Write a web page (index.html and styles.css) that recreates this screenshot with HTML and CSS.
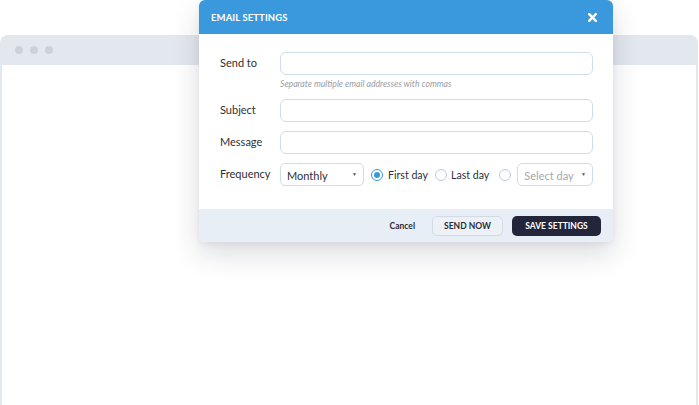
FILE: index.html
```html
<!DOCTYPE html>
<html>
<head>
<meta charset="utf-8">
<link rel="stylesheet" href="styles.css">
</head>
<body>
<div class="window">
  <div class="titlebar">
    <span class="dot"></span><span class="dot"></span><span class="dot"></span>
  </div>
  <div class="content"></div>
</div>

<div class="modal">
  <div class="modal-header">
    <span class="modal-title">EMAIL SETTINGS</span>
    <svg class="close" width="9" height="9" viewBox="0 0 9 9"><path d="M1.2 1.2L7.8 7.8M7.8 1.2L1.2 7.8" stroke="#fff" stroke-width="2.4" stroke-linecap="square"/></svg>
  </div>
  <div class="modal-body">
    <div class="row">
      <label class="label">Send to</label>
      <div class="field">
        <div class="input"></div>
        <div class="help">Separate multiple email addresses with commas</div>
      </div>
    </div>
    <div class="row">
      <label class="label">Subject</label>
      <div class="field"><div class="input"></div></div>
    </div>
    <div class="row">
      <label class="label">Message</label>
      <div class="field"><div class="input"></div></div>
    </div>
    <div class="row">
      <label class="label">Frequency</label>
      <div class="field freq">
        <div class="select monthly"><span>Monthly</span><span class="caret">▼</span></div>
        <span class="radio checked"></span><span class="rlabel">First day</span>
        <span class="radio"></span><span class="rlabel second">Last day</span>
        <span class="radio"></span>
        <div class="select day"><span class="ph">Select day</span><span class="caret">▼</span></div>
      </div>
    </div>
  </div>
  <div class="modal-footer">
    <span class="cancel">Cancel</span>
    <span class="btn secondary">SEND NOW</span>
    <span class="btn primary">SAVE SETTINGS</span>
  </div>
</div>
</body>
</html>
```

FILE: styles.css
```css
* { box-sizing: border-box; }
html, body { margin: 0; padding: 0; background: #fff; }
body {
  font-family: Lato, "Open Sans", sans-serif;
  width: 699px;
  height: 405px;
  overflow: hidden;
  position: relative;
}
.window {
  margin-top: 35px;
  margin-right: 1px;
  height: 380px;
  border: 2px solid #e3e7ee;
  border-bottom: none;
  border-radius: 8px 8px 0 0;
  display: flex;
  flex-direction: column;
}
.titlebar {
  height: 28px;
  background: #e3e7ee;
  display: flex;
  align-items: center;
  gap: 7px;
  padding-left: 13px;
  padding-bottom: 2px;
}
.dot {
  width: 8px;
  height: 8px;
  border-radius: 50%;
  background: #ccd2dc;
}
.content { flex: 1; background: #fff; }

.modal {
  position: absolute;
  left: 199px;
  top: 0;
  width: 414px;
  background: #fff;
  border-radius: 6px;
  box-shadow: 0 12px 28px rgba(30, 40, 60, 0.16), 0 2px 6px rgba(30,40,60,0.06);
  overflow: hidden;
}
.modal-header {
  height: 34px;
  background: #3a98dc;
  display: flex;
  align-items: center;
  justify-content: space-between;
  padding: 0 16px 0 12px;
}
.modal-title {
  color: #fff;
  font-weight: 700;
  font-size: 9.5px;
  letter-spacing: 0.1px;
}
.close { display: block; }

.modal-body {
  padding: 18px 20px 23px 21px;
  display: flex;
  flex-direction: column;
  gap: 9px;
}
.row {
  display: flex;
  align-items: flex-start;
}
.label {
  width: 60px;
  flex: none;
  font-size: 11px;
  color: #2d2f36;
  line-height: 21px;
}
.field { flex: 1; min-width: 0; }
.input {
  height: 23px;
  border: 1.5px solid #cfdcec;
  border-radius: 6px;
  background: #fff;
}
.help {
  font-size: 8.7px;
  font-style: italic;
  color: #9a9ea6;
  margin-top: 3px;
  line-height: 12px;
}
.freq {
  display: flex;
  align-items: center;
  height: 23px;
  white-space: nowrap;
}
.select {
  height: 23px;
  border: 1.5px solid #cfdcec;
  border-radius: 5px;
  display: flex;
  align-items: center;
  justify-content: space-between;
  padding: 0 6px 0 6px;
  font-size: 11px;
  color: #2d2f36;
  flex: none;
}
.select.monthly { width: 84px; margin-right: 7px; }
.select.monthly span:first-child { margin-top: 2px; }
.select.day { flex: 1; margin-left: 6px; }
.caret { font-size: 5px; color: #555; margin-bottom: 2px; }
.ph { color: #a3a7ae; margin-top: 2px; }
.radio {
  width: 12px;
  height: 12px;
  border-radius: 50%;
  border: 1px solid #bccbdc;
  flex: none;
  position: relative;
}
.radio.checked { border-color: #3a98dc; }
.radio.checked::after {
  content: "";
  position: absolute;
  left: 2px; top: 2px;
  width: 6px; height: 6px;
  border-radius: 50%;
  background: #3a98dc;
}
.rlabel {
  font-size: 10.6px;
  color: #2d2f36;
  margin-left: 5px;
  margin-right: 7px;
}
.rlabel.second { margin-left: 4px; margin-right: 10px; }

.modal-footer {
  height: 33px;
  background: #e8eef5;
  display: flex;
  align-items: center;
  justify-content: flex-end;
  padding-right: 12px;
}
.cancel {
  font-size: 8.5px;
  font-weight: 700;
  color: #2a2c3a;
  margin-right: 17px;
}
.btn {
  height: 20px;
  display: flex;
  align-items: center;
  justify-content: center;
  font-size: 8.5px;
  font-weight: 700;
  border-radius: 5px;
}
.btn.secondary {
  width: 71px;
  border: 1.5px solid #d2dae5;
  background: #edf1f6;
  color: #2a2c3a;
  margin-right: 9px;
}
.btn.primary {
  width: 89px;
  background: #23253a;
  color: #fff;
}
```
